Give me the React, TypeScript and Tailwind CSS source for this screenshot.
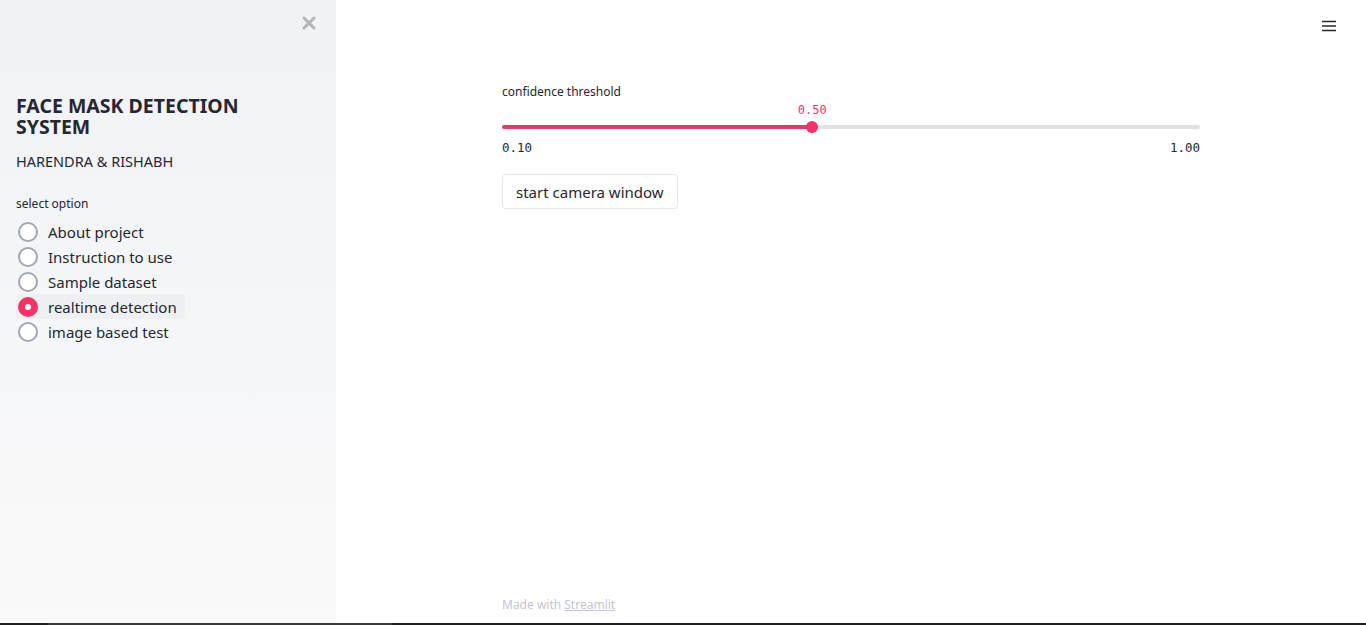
import { useState } from 'react';

const options = ['About project', 'Instruction to use', 'Sample dataset', 'realtime detection', 'image based test'];

export default function App() {
  const [selected, setSelected] = useState(3);
  const value = 0.5;
  const pct = ((value - 0.1) / 0.9) * 100;

  return (
    <div className="w-full h-[625px] flex flex-col overflow-hidden font-['Noto_Sans',sans-serif] text-[#262730]">
      <div className="flex flex-1 min-h-0">
        {/* sidebar */}
        <aside className="w-[336px] shrink-0 bg-linear-to-b from-[#f0f2f6] to-[#fafafa] px-4 relative">
          <button className="absolute right-[20px] top-[16px] text-[#b4b4b8] text-[22px] font-bold leading-none">
            <svg width="14" height="14" viewBox="0 0 14 14">
              <path d="M2 2 L12 12 M12 2 L2 12" stroke="currentColor" strokeWidth="3" strokeLinecap="round" />
            </svg>
          </button>
          <h1 className="mt-[95px] text-[19.5px] font-bold leading-[21px]">
            FACE MASK DETECTION
            <br />
            SYSTEM
          </h1>
          <p className="mt-[14px] text-[14.5px] leading-5">HARENDRA &amp; RISHABH</p>
          <p className="mt-[25px] text-[12px] leading-4">select option</p>
          <div className="mt-[7px] flex flex-col">
            {options.map((o, i) => (
              <label
                key={o}
                onClick={() => setSelected(i)}
                className={`flex items-center h-[25px] w-fit pr-2 rounded cursor-pointer ${
                  selected === i ? 'bg-[#eef0f4]' : ''
                }`}
              >
                <span
                  className={`ml-[2px] w-[20px] h-[20px] rounded-full flex items-center justify-center ${
                    selected === i ? 'bg-[#f63366]' : 'border-2 border-[#a3a6b4] bg-white'
                  }`}
                >
                  {selected === i && <span className="w-[6px] h-[6px] rounded-full bg-white" />}
                </span>
                <span className="ml-[10px] text-[15px] leading-5">{o}</span>
              </label>
            ))}
          </div>
        </aside>

        {/* main */}
        <main className="flex-1 bg-white relative flex flex-col">
          <button className="absolute right-[30px] top-[20px]">
            <svg width="14" height="12" viewBox="0 0 14 12">
              <path d="M0 1.5 H14 M0 6 H14 M0 10.5 H14" stroke="#262730" strokeWidth="1.6" />
            </svg>
          </button>
          <div className="w-[698px] ml-[166px] flex-1 flex flex-col">
            <p className="mt-[84px] text-[12px] leading-4">confidence threshold</p>
            <div className="relative mt-[2px] h-[31px]">
              <span
                className="absolute top-0 -translate-x-1/2 font-['DejaVu_Sans_Mono',monospace] text-[12px] text-[#f63366] leading-4"
                style={{ left: `${pct}%` }}
              >
                0.50
              </span>
              <div className="absolute left-0 right-0 top-[23px] h-[4px] rounded-full bg-[#e1e1e1]" />
              <div className="absolute left-0 top-[23px] h-[4px] rounded-full bg-[#f63366]" style={{ width: `${pct}%` }} />
              <div
                className="absolute top-[19px] w-[12px] h-[12px] -ml-[6px] rounded-full bg-[#f63366]"
                style={{ left: `${pct}%` }}
              />
            </div>
            <div className="flex justify-between font-['DejaVu_Sans_Mono',monospace] text-[12.5px] leading-4 mt-[7px]">
              <span>0.10</span>
              <span>1.00</span>
            </div>
            <div className="mt-[18px]">
              <button className="h-[35px] px-[13px] border border-[#e6e7ea] rounded bg-white text-[15px] leading-5">
                start camera window
              </button>
            </div>
            <div className="mt-auto mb-[10px] text-[12px] leading-4 text-[#c4c6d0]">
              Made with <span className="underline">Streamlit</span>
            </div>
          </div>
        </main>
      </div>
      <div className="h-[2px] bg-[#1e1e1e] flex">
        <div className="w-[48px]" />
        <div className="w-[344px] bg-[#3a3a3a]" />
      </div>
    </div>
  );
}
